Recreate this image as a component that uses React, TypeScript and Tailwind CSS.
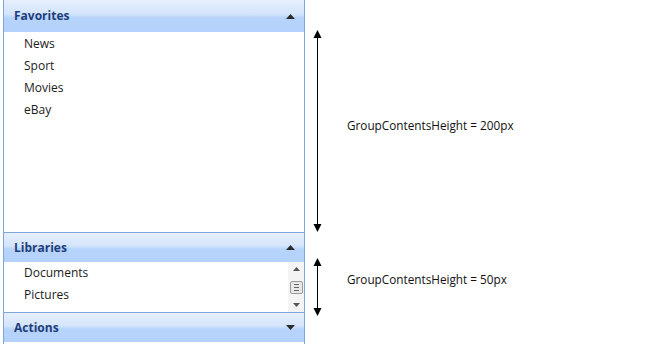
const font = { fontFamily: '"Open Sans", "DejaVu Sans", sans-serif' };

function Caret({ up }: { up: boolean }) {
  return (
    <svg width="9" height="5" viewBox="0 0 9 5" className="shrink-0">
      {up ? <path d="M0 5 L4.5 0 L9 5 Z" fill="#2b2b2b" /> : <path d="M0 0 L4.5 5 L9 0 Z" fill="#2b2b2b" />}
    </svg>
  );
}

function Header({ title, open, top }: { title: string; open: boolean; top?: boolean }) {
  return (
    <div
      className={`flex h-[30px] items-center justify-between pl-[10px] pr-[9px] bg-[linear-gradient(to_bottom,#e6effd_0%,#d3e4fc_45%,#b7d4fb_55%,#b3d1fa_100%)] ${
        top ? "h-[32px]" : "border-t border-[#7ea6dc]"
      }`}
    >
      <span className="text-[12px] font-bold text-[#1e3d7b]">{title}</span>
      <Caret up={open} />
    </div>
  );
}

function Item({ label }: { label: string }) {
  return <div className="flex h-[22px] items-center pl-[20px] text-[12px] text-[#1b1b1b]">{label}</div>;
}

function ScrollBar() {
  return (
    <div className="flex w-[16px] flex-col items-center justify-between bg-[#f4f4f4] py-[5px]">
      <svg width="7" height="4" viewBox="0 0 7 4">
        <path d="M0 4 L3.5 0 L7 4 Z" fill="#555" />
      </svg>
      <div className="flex h-[13px] w-[13px] flex-col justify-center gap-[2px] rounded-[2px] border border-[#9a9a9a] bg-[#e8e8e8] px-[3px]">
        <div className="h-px bg-[#666]" />
        <div className="h-px bg-[#666]" />
        <div className="h-px bg-[#666]" />
      </div>
      <svg width="7" height="4" viewBox="0 0 7 4">
        <path d="M0 0 L3.5 4 L7 0 Z" fill="#555" />
      </svg>
    </div>
  );
}

function Arrow({ h }: { h: number }) {
  return (
    <svg width="9" height={h} viewBox={`0 0 9 ${h}`}>
      <line x1="4.5" y1="4" x2="4.5" y2={h - 4} stroke="#000" strokeWidth="1" />
      <path d="M0.5 8 L4.5 0 L8.5 8 Z" fill="#000" />
      <path d={`M0.5 ${h - 8} L4.5 ${h} L8.5 ${h - 8} Z`} fill="#000" />
    </svg>
  );
}

export default function App() {
  return (
    <main className="flex h-[344px] w-[652px] overflow-hidden bg-white" style={font}>
      <div className="ml-[3px] flex w-[302px] flex-col border-x border-[#7ea6dc]">
        <Header title="Favorites" open top />
        <div className="h-[200px] bg-white pt-[1px]">
          <Item label="News" />
          <Item label="Sport" />
          <Item label="Movies" />
          <Item label="eBay" />
        </div>
        <Header title="Libraries" open />
        <div className="flex h-[50px] bg-white">
          <div className="flex-1">
            <Item label="Documents" />
            <Item label="Pictures" />
          </div>
          <ScrollBar />
        </div>
        <Header title="Actions" open={false} />
      </div>

      <div className="ml-[8px] flex flex-col text-[11.75px] text-[#111]">
        <div className="mt-[30px] flex h-[202px] items-center gap-[25px]">
          <Arrow h={202} />
          <span className="pb-[10px]">GroupContentsHeight = 200px</span>
        </div>
        <div className="mt-[26px] flex h-[58px] items-center gap-[25px]">
          <Arrow h={58} />
          <span className="pb-[14px]">GroupContentsHeight = 50px</span>
        </div>
      </div>
    </main>
  );
}
